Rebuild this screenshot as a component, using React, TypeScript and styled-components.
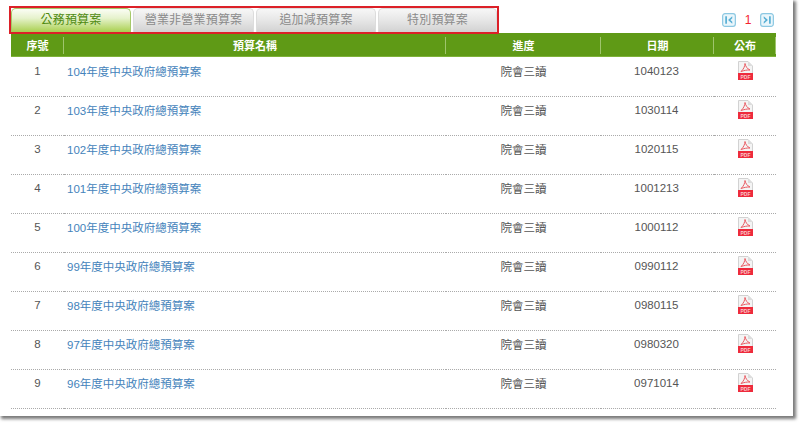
import React from "react";
import styled, { createGlobalStyle } from "styled-components";

const Global = createGlobalStyle`
  html, body { margin: 0; padding: 0; background: #fff; }
  body { width: 800px; height: 423px; overflow: hidden; font-family: "Liberation Sans", "Noto Sans CJK TC", sans-serif; }
`;

const Page = styled.div`
  width: 793px;
  height: 416px;
  box-sizing: border-box;
  background: #fff;
  padding: 6px 0 0 11px;
  box-shadow: 2px 2px 3px 1px #7a7a7a;
  overflow: hidden;
`;

const TopBar = styled.div`
  width: 765px;
  height: 27px;
  display: flex;
  justify-content: space-between;
  position: relative;
`;

const TabFrame = styled.div`
  margin-left: -2px;
  width: 490px;
  height: 28px;
  box-sizing: border-box;
  border: 2px solid #dc2028;
  display: flex;
  gap: 2px;
  position: relative;
  z-index: 2;
`;

const Tab = styled.div<{ $active?: boolean; $w: number }>`
  width: ${(p) => p.$w}px;
  height: 24px;
  box-sizing: border-box;
  border: 1px solid ${(p) => (p.$active ? "#a5c96a" : "#dcdcdc")};
  border-bottom: none;
  border-radius: 5px 5px 0 0;
  background: ${(p) =>
    p.$active
      ? "linear-gradient(#fbfdf5 0%, #e6f2cc 40%, #a9d04f 100%)"
      : "linear-gradient(#f7f7f7 0%, #e6e6e6 50%, #d2d2d2 100%)"};
  color: ${(p) => (p.$active ? "#4e8a10" : "#8a8a8a")};
  font-size: 12px;
  line-height: 23px;
  letter-spacing: 0.2px;
  text-align: center;
`;

const Pager = styled.div`
  display: flex;
  align-items: center;
  height: 14px;
  margin: 7px 2px 0 0;
`;

const PagerNum = styled.span`
  width: 24px;
  text-align: center;
  color: #f5222d;
  font-size: 12px;
`;

const Table = styled.table`
  width: 765px;
  border-collapse: collapse;
  table-layout: fixed;
`;

const HeadRow = styled.tr`
  background: #5f9a16;
  height: 24px;
`;

const Th = styled.th<{ $w: number }>`
  width: ${(p) => p.$w}px;
  padding: 0;
  color: #fff;
  font-size: 11px;
  font-weight: bold;
  text-align: center;
  position: relative;
  box-shadow: inset 0 -1px 0 #7fb23a;
  &::after {
    content: "";
    position: absolute;
    right: 0;
    top: 4px;
    bottom: 3px;
    width: 1px;
    background: #9fc56c;
  }
`;

const Row = styled.tr`
  height: 39px;
  border-bottom: 1px dotted #aaa;
`;

const Td = styled.td<{ $left?: boolean; $right?: number }>`
  padding: 0 ${(p) => p.$right ?? 0}px 11px ${(p) => (p.$left ? "3px" : "0")};
  text-align: ${(p) => (p.$left ? "left" : "center")};
  color: #555;
  font-size: 11.5px;
  vertical-align: middle;
`;

const Title = styled.span`
  color: #4483bb;
  font-size: 11.5px;
`;

const PdfCell = styled.td`
  padding: 0 0 12px;
  text-align: center;
  vertical-align: middle;
  line-height: 0;
`;

const PdfLabel = styled.text`
  font-family: "Liberation Sans", sans-serif;
  font-size: 5px;
  font-weight: bold;
  fill: #f9c6ca;
`;

const Arrow = ({ flip }: { flip?: boolean }) => (
  <svg width="14" height="14" viewBox="0 0 15 15" style={flip ? { transform: "scaleX(-1)" } : undefined}>
    <rect x="0.7" y="0.7" width="13.6" height="13.6" rx="2.5" fill="#eaf6fb" stroke="#8cc8e2" strokeWidth="1.3" />
    <rect x="3.5" y="3.5" width="1.8" height="8" fill="#56aed4" />
    <path d="M11 3.5 L6.5 7.5 L11 11.5 L11 9.5 L9 7.5 L11 5.5 Z" fill="#56aed4" />
  </svg>
);

const PdfIcon = () => (
  <svg width="15" height="19" viewBox="0 0 15 19">
    <path d="M0.5 0.5 H10 L14.5 5 V18.5 H0.5 Z" fill="#f4f4f4" stroke="#d2d2d2" />
    <path d="M10 0.5 V5 H14.5 Z" fill="#dcdcdc" />
    <path d="M7 2.5 C7 5 5.5 8.5 3 10.5 M7 2.5 C7.5 5.5 9.5 8 12 9 C9 8.8 6 9.5 3 10.5" fill="none" stroke="#ea5a62" strokeWidth="1" />
    <rect x="0" y="12" width="15" height="7" fill="#ee2b3c" />
    <PdfLabel x="7.5" y="17.5" textAnchor="middle">PDF</PdfLabel>
  </svg>
);

const rows = [
  ["1", "104年度中央政府總預算案", "1040123"],
  ["2", "103年度中央政府總預算案", "1030114"],
  ["3", "102年度中央政府總預算案", "1020115"],
  ["4", "101年度中央政府總預算案", "1001213"],
  ["5", "100年度中央政府總預算案", "1000112"],
  ["6", "99年度中央政府總預算案", "0990112"],
  ["7", "98年度中央政府總預算案", "0980115"],
  ["8", "97年度中央政府總預算案", "0980320"],
  ["9", "96年度中央政府總預算案", "0971014"],
];

export default function App() {
  return (
    <>
      <Global />
      <Page>
        <TopBar>
          <TabFrame>
            <Tab $active $w={120}>公務預算案</Tab>
            <Tab $w={121}>營業非營業預算案</Tab>
            <Tab $w={120}>追加減預算案</Tab>
            <Tab $w={119}>特別預算案</Tab>
          </TabFrame>
          <Pager>
            <Arrow />
            <PagerNum>1</PagerNum>
            <Arrow flip />
          </Pager>
        </TopBar>
        <Table>
          <thead>
            <HeadRow>
              <Th $w={53}>序號</Th>
              <Th $w={382}>預算名稱</Th>
              <Th $w={155}>進度</Th>
              <Th $w={113}>日期</Th>
              <Th $w={62}>公布</Th>
            </HeadRow>
          </thead>
          <tbody>
            {rows.map(([n, t, d]) => (
              <Row key={n}>
                <Td>{n}</Td>
                <Td $left><Title>{t}</Title></Td>
                <Td>院會三讀</Td>
                <Td $right={2}>{d}</Td>
                <PdfCell><PdfIcon /></PdfCell>
              </Row>
            ))}
          </tbody>
        </Table>
      </Page>
    </>
  );
}
